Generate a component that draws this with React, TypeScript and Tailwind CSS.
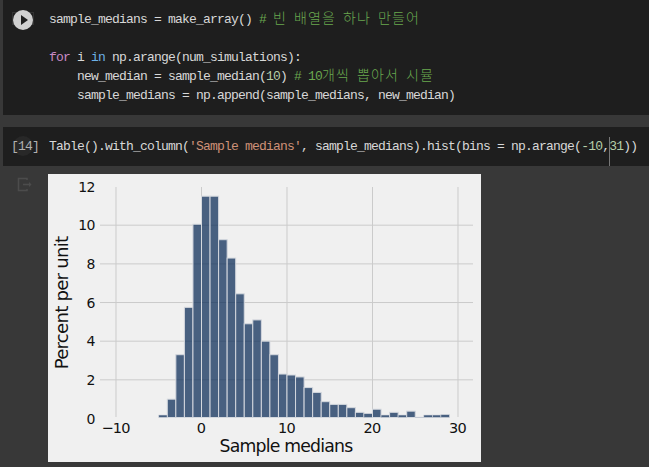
const bars = [
  [-5, 0.1], [-4, 1.0], [-3, 3.3], [-2, 5.75], [-1, 10.05], [0, 11.5], [1, 11.5], [2, 9.25], [3, 8.3], [4, 6.45],
  [5, 4.9], [6, 5.1], [7, 4.0], [8, 3.3], [9, 2.3], [10, 2.25], [11, 2.15], [12, 1.6], [13, 1.35], [14, 0.87],
  [15, 0.73], [16, 0.73], [17, 0.56], [18, 0.32], [19, 0.25], [20, 0.48], [21, 0.15], [22, 0.32], [23, 0.15],
  [24, 0.38], [25, 0.02], [26, 0.1], [27, 0.1], [28, 0.2],
]

// chart coords are relative to the light panel, which starts at 48,174
const xPos = (v: number) => 153.5 + 8.55 * v
const yPos = (v: number) => 244.5 - 19.33 * v
const barBase = 243.5

function Hist() {
  return (
    <svg width="433" height="288" viewBox="0 0 433 288" className="block" style={{ fontFamily: '"DejaVu Sans", sans-serif' }}>
      <rect width="433" height="288" fill="#f0f0f0" />
      {[-10, 0, 10, 20, 30].map((v) => (
        <line key={v} x1={xPos(v)} x2={xPos(v)} y1={13} y2={243} stroke="#cbcbcb" strokeWidth="1" />
      ))}
      {[2, 4, 6, 8, 10].map((v) => (
        <line key={v} x1={52} x2={425} y1={yPos(v)} y2={yPos(v)} stroke="#cbcbcb" strokeWidth="1" />
      ))}
      {bars.map(([v, h]) => {
        // the shortest bars still need a visible dark core between their edges
        const top = h < 0.05 ? barBase - 0.5 : Math.min(yPos(h), barBase - 2.5)
        return (
          <rect
            key={v}
            x={xPos(v)}
            y={top}
            width={8.55}
            height={barBase - top}
            fill="#072855"
            fillOpacity="0.72"
            stroke={h < 0.05 ? '#e0e2e6' : '#d4d8de'}
            strokeWidth={h < 0.3 ? 0.6 : 1}
          />
        )
      })}
      {[0, 2, 4, 6, 8, 10, 12].map((v) => (
        <text key={v} x={46.5} y={yPos(v) + 5} textAnchor="end" fontSize="14" fill="#111">{v}</text>
      ))}
      {[-10, 0, 10, 20, 30].map((v) => (
        <text key={v} x={xPos(v) - 0.5} y={258.5} textAnchor="middle" fontSize="14.5" fill="#111">{v < 0 ? `\u2212${-v}` : v}</text>
      ))}
      <text x={238} y={278} textAnchor="middle" fontSize="17.3" fill="#111">Sample medians</text>
      <text transform="translate(20 129) rotate(-90)" textAnchor="middle" fontSize="18.2" fill="#111">Percent per unit</text>
    </svg>
  )
}

function Ko({ children }: { children: string }) {
  return (
    <span
      className="text-[14px] leading-none tracking-[1.1px] [word-spacing:2.8px] font-light"
      style={{ fontFamily: '"Noto Sans CJK KR", sans-serif' }}
    >
      {children}
    </span>
  )
}

function Line({ children }: { children?: React.ReactNode }) {
  return <div className="h-[19px] leading-[19px] whitespace-pre">{children}</div>
}

export default function App() {
  return (
    <div className="w-[649px] h-[467px] overflow-hidden bg-[#383838] pl-[3px] text-[#d8d8d8] font-['Liberation_Mono',monospace] text-[13px] leading-[19px] tracking-[-0.8px]">
      {/* first cell */}
      <div className="h-[115px] bg-[#1e1e1e] flex">
        <div className="w-[46px] pt-[10px] pl-[10px] relative">
          <div className="absolute left-[9px] top-3 w-[22px] h-[13px] border border-[#333]" />
          <div className="relative w-5 h-5 rounded-full bg-[#d0d0d0] flex items-center justify-center">
            <div className="ml-[2px] w-0 h-0 border-y-[5px] border-y-transparent border-l-[7px] border-l-[#1e1e1e]" />
          </div>
        </div>
        <div className="pt-[10px]">
          <Line>sample_medians = make_array() <span className="text-[#6aa84f]"># <Ko>빈 배열을 하나 만들어</Ko></span></Line>
          <Line />
          <Line><span className="text-[#c98ac4]">for</span> i <span className="text-[#6cb0e6]">in</span> np.arange(num_simulations):</Line>
          <Line>{'    '}new_median = sample_median(<span className="text-[#b5cea8]">10</span>) <span className="text-[#6aa84f]"># 10<Ko>개씩 뽑아서 시뮬</Ko></span></Line>
          <Line>{'    '}sample_medians = np.append(sample_medians, new_median)</Line>
        </div>
      </div>

      {/* second cell */}
      <div className="mt-3 h-[39px] bg-[#1e1e1e] flex relative">
        <div className="w-[46px] pl-2 pt-[10px] text-[#b0b0b0] relative">
          <div className="absolute left-[10px] top-[9px] w-5 h-5 rounded-full bg-[#282828]" />
          <div className="relative">[14]</div>
        </div>
        <div className="pt-[10px]">
          <Line>Table().with_column(<span className="text-[#ce9178]">'Sample medians'</span>, sample_medians).hist(bins = np.arange(<span className="text-[#b5cea8]">-10</span>,<span className="text-[#b5cea8]">31</span>))</Line>
        </div>
        <div className="absolute left-[606px] top-[10px] bottom-0 w-px bg-[#777]" />
      </div>

      {/* output */}
      <div className="flex pt-2">
        <div className="w-[45px] pl-[14px] pt-[3px]">
          <svg width="16" height="16" viewBox="0 0 16 16" fill="none" stroke="#4c4c4c" strokeWidth="1.5">
            <path d="M10 3V1.5H1.5v12H10V12" />
            <path d="M6 7.5h7" />
            <path d="M12 5l2.5 2.5L12 10" fill="#4c4c4c" stroke="none" />
          </svg>
        </div>
        <Hist />
      </div>
    </div>
  )
}
